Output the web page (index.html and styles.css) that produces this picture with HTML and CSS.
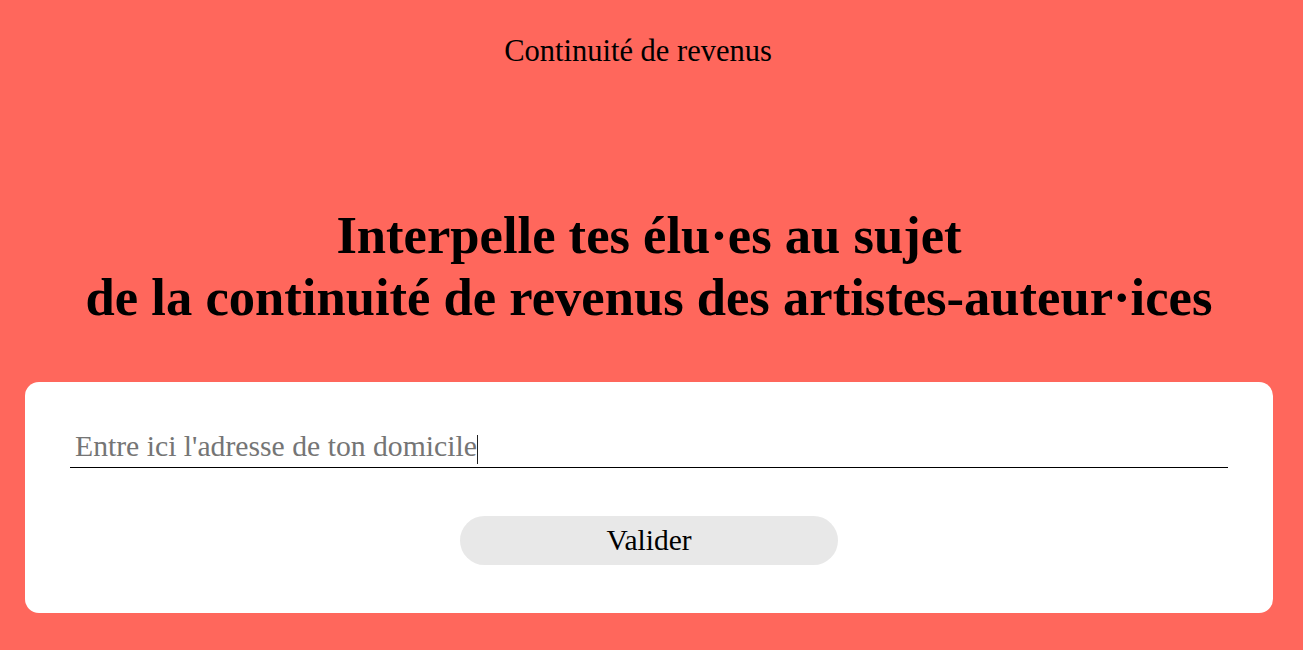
FILE: index.html
```html
<!DOCTYPE html>
<html lang="fr">
<head>
<meta charset="utf-8">
<title>Continuité de revenus</title>
<link rel="stylesheet" href="styles.css">
</head>
<body>
<div class="page">
  <header class="site-header">Continuité de revenus</header>
  <h1 class="headline">Interpelle tes élu·es au sujet<br>de la continuité de revenus des artistes-auteur·ices</h1>
  <form class="card" onsubmit="return false">
    <div class="field"><span class="field-text">Entre ici l'adresse de ton domicile</span><span class="caret"></span></div>
    <button type="submit" class="submit">Valider</button>
  </form>
</div>
</body>
</html>
```
FILE: styles.css
```css
html, body {
  margin: 0;
  padding: 0;
  background: #ff675c;
}
body {
  font-family: "Liberation Serif", "Times New Roman", serif;
  color: #000;
  height: 650px;
  overflow: hidden;
}
.page {
  padding: 0 30px 0 25px;
}
.site-header {
  padding: 33px 22px 0 0;
  font-size: 30.5px;
  line-height: 36px;
  text-align: center;
}
.headline {
  margin: 135px 0 0;
  font-size: 52.6px;
  line-height: 62px;
  font-weight: 700;
  text-align: center;
}
.card {
  margin-top: 54px;
  background: #fff;
  border-radius: 14px;
  padding: 46px 45px 48px;
  display: flex;
  flex-direction: column;
  align-items: center;
}
.field {
  align-self: stretch;
  display: flex;
  align-items: center;
  padding: 0 5px 3px;
  border-bottom: 1px solid #000;
  font-size: 29.7px;
  line-height: 36px;
  color: #757575;
}
.caret {
  display: inline-block;
  width: 1.5px;
  height: 29px;
  margin-top: 6px;
  background: #222;
}
.submit {
  margin-top: 48px;
  width: 378px;
  height: 49px;
  border: none;
  border-radius: 25px;
  background: #e8e8e8;
  font-family: inherit;
  font-size: 29.5px;
  line-height: 49px;
  color: #000;
  padding: 0;
  cursor: pointer;
}
```
